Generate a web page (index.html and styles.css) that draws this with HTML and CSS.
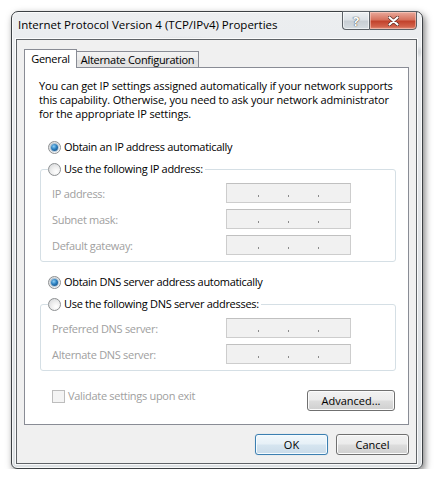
FILE: index.html
```html
<!DOCTYPE html>
<html>
<head>
<meta charset="utf-8">
<link rel="stylesheet" href="styles.css">
</head>
<body>
<div class="window">
  <div class="titlebar">
    <span class="title">Internet Protocol Version 4 (TCP/IPv4) Properties</span>
    <div class="caption">
      <div class="cbtn help">?</div>
      <div class="cbtn close">
        <svg width="11" height="10" viewBox="0 0 11 10"><path d="M1.5 1.5 L9.5 8.5 M9.5 1.5 L1.5 8.5" stroke="#5a2a22" stroke-width="3.6" stroke-linecap="round"/><path d="M1.5 1.5 L9.5 8.5 M9.5 1.5 L1.5 8.5" stroke="#fff" stroke-width="2.2" stroke-linecap="round"/></svg>
      </div>
    </div>
  </div>
  <div class="client">
    <div class="tabs">
      <div class="tab active">General</div>
      <div class="tab">Alternate Configuration</div>
    </div>
    <div class="panel">
      <p class="intro">You can get IP settings assigned automatically if your network supports<br>this capability. Otherwise, you need to ask your network administrator<br>for the appropriate IP settings.</p>
      <div class="opt"><span class="radio checked"></span>Obtain an IP address automatically</div>
      <fieldset class="group">
        <legend><span class="radio"></span>Use the following IP address:</legend>
        <div class="frow"><span class="flabel">IP address:</span><span class="ipbox"><span class="dot"></span><span class="dot"></span><span class="dot"></span></span></div>
        <div class="frow"><span class="flabel">Subnet mask:</span><span class="ipbox"><span class="dot"></span><span class="dot"></span><span class="dot"></span></span></div>
        <div class="frow"><span class="flabel">Default gateway:</span><span class="ipbox"><span class="dot"></span><span class="dot"></span><span class="dot"></span></span></div>
      </fieldset>
      <div class="opt opt2"><span class="radio checked"></span>Obtain DNS server address automatically</div>
      <fieldset class="group">
        <legend><span class="radio"></span>Use the following DNS server addresses:</legend>
        <div class="frow"><span class="flabel">Preferred DNS server:</span><span class="ipbox"><span class="dot"></span><span class="dot"></span><span class="dot"></span></span></div>
        <div class="frow"><span class="flabel">Alternate DNS server:</span><span class="ipbox"><span class="dot"></span><span class="dot"></span><span class="dot"></span></span></div>
      </fieldset>
      <div class="bottom">
        <div class="check"><span class="box"></span>Validate settings upon exit</div>
        <button class="btn adv">Advanced...</button>
      </div>
    </div>
    <div class="dialog-btns">
      <button class="btn default">OK</button>
      <button class="btn">Cancel</button>
    </div>
  </div>
</div>
</body>
</html>
```
FILE: styles.css
```css
* { box-sizing: border-box; }
body {
  margin: 0;
  background: #fff;
  font-family: "Open Sans", "Noto Sans", sans-serif;
  font-size: 11px;
  letter-spacing: -0.3px;
  color: #000;
}
.window {
  margin: 11px 0 0 11px;
  width: 412px;
  height: 458px;
  border: 1px solid #3c4044;
  border-radius: 7px 7px 6px 6px;
  background:
    radial-gradient(ellipse 60px 8px at 170px 32px, rgba(150,155,160,.35), transparent),
    radial-gradient(ellipse 40px 6px at 395px 40px, rgba(150,155,160,.35), transparent),
    linear-gradient(180deg, #eceef0 0%, #e3e6e9 40%, #dde1e4 100%);
  padding: 0 5px 4px 4px;
  box-shadow: 2px 3px 7px rgba(0,0,0,.5), inset 0 0 0 1px rgba(255,255,255,.75);
  display: flex;
  flex-direction: column;
}
.titlebar {
  height: 27px;
  flex: none;
  display: flex;
  justify-content: space-between;
  align-items: flex-start;
}
.title {
  padding: 6px 0 0 2px;
  line-height: 14px;
  font-size: 11.5px;
  letter-spacing: 0;
}
.caption {
  display: flex;
  margin-top: -1px;
}
.cbtn {
  height: 19px;
  display: flex;
  align-items: center;
  justify-content: center;
  border: 1px solid #5b6066;
}
.help {
  width: 27px;
  border-right: none;
  border-radius: 0 0 0 4px;
  background: linear-gradient(180deg, #eef1f4 0%, #dde2e7 45%, #c8ced4 55%, #d6dce1 100%);
  color: #fff;
  font-weight: bold;
  font-size: 13px;
  text-shadow: 0 0 1px #444, 0 0 1px #444;
  box-shadow: inset 0 0 0 1px rgba(255,255,255,.6);
}
.close {
  width: 48px;
  border-radius: 0 0 4px 0;
  background: linear-gradient(180deg, #e9a99b 0%, #d7735f 45%, #c2432d 55%, #d2624b 85%, #e0907c 100%);
  box-shadow: inset 0 0 0 1px rgba(255,220,210,.5);
}
.client {
  flex: none;
  height: 425px;
  border: 1px solid #5f6367;
  background: #f0f0f0;
  padding: 9px 7px 8px 7px;
  display: flex;
  flex-direction: column;
  box-shadow: 0 0 0 1px rgba(255,255,255,.8);
}
.tabs {
  display: flex;
  align-items: flex-end;
  height: 18px;
  flex: none;
}
.tab {
  height: 16px;
  width: 123px;
  margin-left: -1px;
  border: 1px solid #898c95;
  border-bottom: none;
  display: flex;
  align-items: center;
  justify-content: center;
  line-height: 14px;
  white-space: nowrap;
  background: linear-gradient(180deg, #f3f3f3 0%, #ebebeb 50%, #dedede 52%, #e4e4e4 100%);
}
.tab.active {
  width: 53px;
  height: 19px;
  margin-left: 0;
  margin-bottom: -1px;
  background: #fff;
  position: relative;
  z-index: 1;
  padding-bottom: 1px;
}
.panel {
  height: 358px;
  flex: none;
  border: 1px solid #898c95;
  background: #fff;
  padding-top: 11px;
}
.intro {
  margin: 0 0 0 14px;
  line-height: 14px;
  white-space: nowrap;
  letter-spacing: -0.14px;
}
.opt {
  display: flex;
  align-items: center;
  gap: 3px;
  height: 14px;
  margin: 19px 0 0 23px;
  line-height: 14px;
}
.opt2 { margin-top: 13px; }
.radio {
  width: 13px;
  height: 13px;
  flex: none;
  border-radius: 50%;
  border: 1px solid #8d9092;
  background: radial-gradient(circle at 65% 70%, #ffffff 0%, #f0f0f0 40%, #d2d4d6 100%);
  display: flex;
  align-items: center;
  justify-content: center;
}
.radio.checked::after {
  content: "";
  width: 7px;
  height: 7px;
  border-radius: 50%;
  background: radial-gradient(circle at 40% 35%, #8fd0f5 0%, #2b7fc0 45%, #0f3f6e 100%);
  box-shadow: 0 0 0 1px rgba(60,120,170,.35);
}
.group {
  margin: 8px 12px 0 15px;
  padding: 0 0 6px 7px;
  border: 1px solid #d5dfe5;
  border-radius: 3px;
  min-width: 0;
}
.group legend {
  padding: 0 2px 0 0;
  display: flex;
  align-items: center;
  gap: 3px;
  height: 14px;
  line-height: 14px;
}
.frow {
  display: flex;
  align-items: center;
  height: 20px;
  margin-top: 6px;
  padding-left: 4px;
  color: #a0a0a0;
}
.group legend + .frow { margin-top: 7px; }
.flabel { width: 174px; }
.ipbox {
  width: 125px;
  height: 20px;
  border: 1px solid #cdcdcd;
  border-top-color: #c0c0c0;
  background: #f1f1f1;
  display: flex;
  padding-left: 2px;
}
.dot {
  width: 30px;
  display: flex;
  justify-content: flex-end;
  align-items: flex-end;
  padding-bottom: 5px;
}
.dot::after {
  content: "";
  width: 1px;
  height: 2px;
  background: #8a8a8a;
}
.bottom {
  display: flex;
  justify-content: space-between;
  align-items: flex-start;
  margin: 0 13px 0 27px;
}
.check {
  display: flex;
  align-items: center;
  gap: 3px;
  margin-top: 18px;
  height: 14px;
  line-height: 14px;
  color: #a0a0a0;
}
.box {
  width: 13px;
  height: 13px;
  border: 1px solid #bdbdbd;
  background: #f4f4f4;
}
.btn {
  height: 21px;
  width: 73px;
  padding: 0;
  border: 1px solid #707070;
  border-radius: 3px;
  background: linear-gradient(180deg, #f2f2f2 0%, #ebebeb 48%, #dddddd 52%, #cfcfcf 100%);
  box-shadow: inset 0 0 0 1px #fbfbfb;
  font: inherit;
  color: #000;
  line-height: 14px;
}
.adv {
  width: 88px;
  margin-top: 19px;
}
.default {
  border-color: #3c7fb1;
  background: linear-gradient(180deg, #f2f8fc 0%, #e6f0f7 48%, #d6e5f0 52%, #cadbe9 100%);
  box-shadow: inset 0 0 0 1px #f4fbff, 0 0 1px rgba(60,127,177,.4);
}
.dialog-btns {
  display: flex;
  justify-content: flex-end;
  gap: 8px;
  margin-top: 9px;
}
```
